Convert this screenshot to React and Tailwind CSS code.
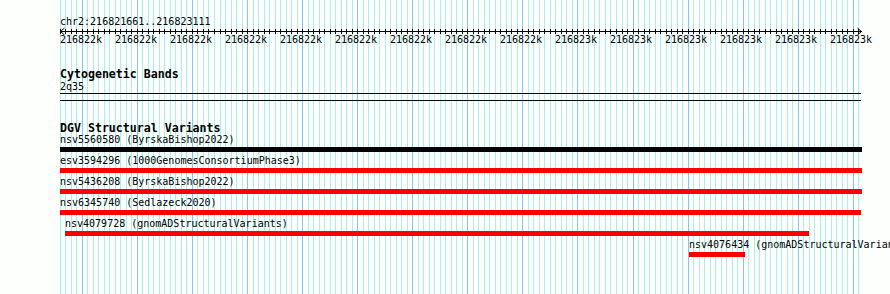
import React from "react";

const GRID_COUNT = 146;
const gridX = (i) => Math.floor(60.3 + i * 5.507);

const tickLabels = [
	...Array(9).fill("216822k"),
	...Array(6).fill("216823k"),
];

const variants = [
	{ label: "nsv5560580 (ByrskaBishop2022)", offset: 0, width: 802, color: "bg-black" },
	{ label: "esv3594296 (1000GenomesConsortiumPhase3)", offset: 0, width: 802, color: "bg-[#ff0000]" },
	{ label: "nsv5436208 (ByrskaBishop2022)", offset: 0, width: 802, color: "bg-[#ff0000]" },
	{ label: "nsv6345740 (Sedlazeck2020)", offset: 0, width: 801, color: "bg-[#ff0000]" },
	{ label: "nsv4079728 (gnomADStructuralVariants)", offset: 5, width: 744, color: "bg-[#ff0000]" },
	{ label: "nsv4076434 (gnomADStructuralVariants)", offset: 629, width: 56, color: "bg-[#ff0000]" },
];

const GridLines = () => (
	<svg className="absolute inset-0" width="890" height="294">
		{Array.from({ length: GRID_COUNT }, (_, i) => (
			<rect
				key={i}
				x={gridX(i)}
				y="0"
				width="1"
				height="294"
				fill={i % 10 === 4 ? "#84c6ec" : "#aaeeee"}
			/>
		))}
	</svg>
);

const Ruler = () => (
	<svg width="803" height="8" className="block -ml-px">
		<g transform="translate(-59,-27)" stroke="#000" strokeWidth="1" fill="none" shapeRendering="crispEdges">
			<line x1="60" y1="31.5" x2="862" y2="31.5" />
			{Array.from({ length: GRID_COUNT }, (_, i) => (
				<line key={i} x1={gridX(i) + 0.5} y1="29" x2={gridX(i) + 0.5} y2="34" />
			))}
		</g>
		<g transform="translate(-59,-27)" stroke="#000" strokeWidth="1" fill="none">
			<polyline points="64.5,28 60.5,31.5 64.5,35" />
			<polyline points="857.5,28 861.5,31.5 857.5,35" />
		</g>
	</svg>
);

export default function App() {
	return (
		<div className="relative w-[890px] h-[294px] overflow-hidden bg-[#fcfffc] text-black font-['DejaVu_Sans_Mono',monospace]">
			<GridLines />
			<div className="relative pl-[60px] pt-[17px] w-[890px]">
				<div className="text-[10px] leading-[10px] whitespace-nowrap">chr2:216821661..216823111</div>
				<Ruler />
				<div className="flex text-[10px] leading-[10px] whitespace-nowrap">
					{tickLabels.map((label, i) => (
						<div key={i} className="w-[55px] shrink-0">
							{label}
						</div>
					))}
				</div>

				<div className="mt-[23px] text-[11.6px] leading-[12px] font-bold whitespace-nowrap">Cytogenetic Bands</div>
				<div className="mt-[2px] text-[10px] leading-[10px]">2q35</div>
				<div className="mt-[1px] h-px w-[801px] bg-black" />
				<div className="mt-[6px] h-px w-[801px] bg-black" />

				<div className="mt-[21px] text-[11.6px] leading-[12px] font-bold whitespace-nowrap">DGV Structural Variants</div>
				<div className="mt-[1px] flex flex-col">
					{variants.map((v) => (
						<div key={v.label} className="mb-[4px]" style={{ marginLeft: v.offset }}>
							<div className="text-[10px] leading-[10px] whitespace-nowrap">{v.label}</div>
							<div className={`mt-[2px] h-[5px] ${v.color}`} style={{ width: v.width }} />
						</div>
					))}
				</div>
			</div>
		</div>
	);
}
